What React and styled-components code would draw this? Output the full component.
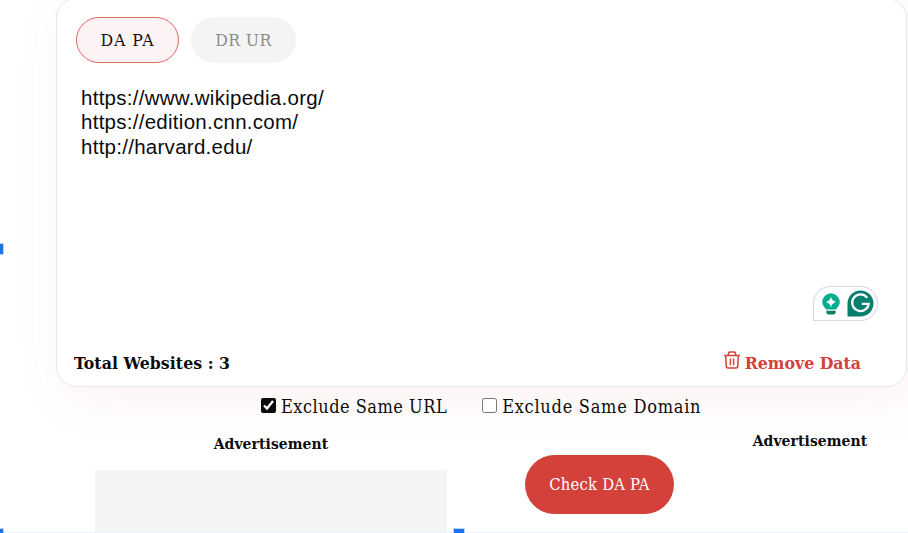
import React, { useState } from 'react';
import styled, { createGlobalStyle } from 'styled-components';

export default function App() {
  const [tab, setTab] = useState('DA PA');
  const [sites, setSites] = useState(
    'https://www.wikipedia.org/\nhttps://edition.cnn.com/\nhttp://harvard.edu/'
  );
  const [sameUrl, setSameUrl] = useState(true);
  const [sameDomain, setSameDomain] = useState(false);
  const total = sites.split('\n').filter((line) => line.trim()).length;

  return (
    <>
      <GlobalStyle />
      <Page>
        <Card>
          <Tabs>
            <Tab $active={tab === 'DA PA'} onClick={() => setTab('DA PA')}>
              DA PA
            </Tab>
            <Tab $wide $active={tab === 'DR UR'} onClick={() => setTab('DR UR')}>
              DR UR
            </Tab>
          </Tabs>
          <TextArea
            value={sites}
            spellCheck={false}
            onChange={(e) => setSites(e.target.value)}
          />
          <Assistant>
            <BulbIcon />
            <WriterIcon />
          </Assistant>
          <CardFooter>
            <Total>Total Websites : {total}</Total>
            <RemoveButton onClick={() => setSites('')}>
              <TrashIcon />
              Remove Data
            </RemoveButton>
          </CardFooter>
        </Card>
        <Options>
          <Option $spacing={0.5}>
            <Check
              type="checkbox"
              checked={sameUrl}
              onChange={() => setSameUrl(!sameUrl)}
            />
            Exclude Same URL
          </Option>
          <Option $spacing={0.75}>
            <Check
              type="checkbox"
              checked={sameDomain}
              onChange={() => setSameDomain(!sameDomain)}
            />
            Exclude Same Domain
          </Option>
        </Options>
        <Bottom>
          <AdColumn>
            <AdLabel>Advertisement</AdLabel>
            <AdBox />
          </AdColumn>
          <CheckButton>Check {tab}</CheckButton>
          <SideAd>
            <AdLabel>Advertisement</AdLabel>
          </SideAd>
        </Bottom>
        <SelectionEdge />
        <Handle $left={-8} $top={243} />
        <Handle $left={-8} $top={528} />
        <Handle $left={453} $top={528} />
      </Page>
    </>
  );
}

function TrashIcon() {
  return (
    <svg width="16" height="18" viewBox="0 0 17 19" fill="none" stroke="#d4403a" strokeWidth="1.6">
      <path d="M0 4.6h17M4.500 4.300l.5-2.200q.3-1 1.400-1h4.200q1.100 0 1.400 1l.5 2.200M1.700 4.700l.7 11.600q.1 1.700 1.700 1.700h8.800q1.600 0 1.700-1.700l.7-11.600M6.800 8v7M10.200 8v7" />
    </svg>
  );
}

function BulbIcon() {
  return (
    <svg width="18" height="22" viewBox="0 0 18 22">
      <path
        fill="#08ac8e"
        d="M9 .3a8.8 8.8 0 0 1 8.8 8.8c0 3.500-2.400 5-3.700 7.400H3.900C2.600 14.100.2 12.600.2 9.100A8.800 8.800 0 0 1 9 .3z"
      />
      <path
        fill="#fff"
        d="M9 3.800Q9.900 8.100 14.200 9 9.900 9.900 9 14.200 8.100 9.900 3.800 9 8.100 8.100 9 3.800z"
      />
      <path fill="#07806c" d="M4.300 17.800h9.400v1q0 2.700-2.700 2.700H7q-2.700 0-2.700-2.700z" />
    </svg>
  );
}

function WriterIcon() {
  return (
    <svg width="27" height="27" viewBox="0 0 27 27">
      <path fill="#067f6d" d="M13.500.5a13 13 0 1 1 0 26H.5v-13a13 13 0 0 1 13-13z" />
      <path
        fill="none"
        stroke="#fff"
        strokeWidth="2.200"
        d="M20.200 7.800A8.300 8.300 0 1 0 21.700 13.900H14.800M21.700 12.800Q21.700 15.600 20 18.600"
      />
    </svg>
  );
}

const GlobalStyle = createGlobalStyle`
  * {
    box-sizing: border-box;
  }
  body {
    margin: 0;
    background: #ffffff;
    color: #0c0c0c;
    font-family: 'DejaVu Serif Condensed', 'DejaVu Serif', serif;
    font-stretch: condensed;
  }
  button {
    font-family: inherit;
    font-stretch: inherit;
    padding: 0;
    cursor: pointer;
    white-space: nowrap;
  }
`;

const Page = styled.div`
  position: relative;
  width: 908px;
  height: 533px;
  overflow: hidden;
  display: flex;
  flex-direction: column;
`;

const Card = styled.div`
  flex: none;
  display: flex;
  flex-direction: column;
  width: 851px;
  height: 389px;
  margin: -2px 0 0 56px;
  padding: 18px 45px 11px 19px;
  background: #ffffff;
  border: 1px solid #e8e6e8;
  border-radius: 20px;
  box-shadow: 10px 10px 54px rgba(212, 64, 58, 0.08);
`;

const Tabs = styled.div`
  display: flex;
  gap: 12px;
`;

const Tab = styled.button`
  width: ${(props) => (props.$wide ? 105 : 103)}px;
  height: 46px;
  border: 1px solid ${(props) => (props.$active ? '#e0645f' : '#f4f4f4')};
  border-radius: 23px;
  background: ${(props) => (props.$active ? '#fef3f4' : '#f4f4f4')};
  color: ${(props) => (props.$active ? '#111111' : '#8c8c8c')};
  font-size: 17.5px;
  letter-spacing: ${(props) => (props.$wide ? 0.4 : 0.9)}px;
`;

const TextArea = styled.textarea`
  flex: 1;
  margin-top: 23px;
  padding: 0 5px;
  border: none;
  outline: none;
  resize: none;
  background: transparent;
  color: #0c0c0c;
  font-family: 'Liberation Sans', Arial, sans-serif;
  font-size: 20.5px;
  letter-spacing: 0.27px;
  line-height: 24.3px;
`;

const Assistant = styled.div`
  align-self: flex-end;
  display: flex;
  align-items: center;
  gap: 7px;
  width: 65px;
  height: 35px;
  margin-right: -17px;
  padding-left: 8px;
  border: 1px solid #d5d8e6;
  border-radius: 18px 18px 18px 1px;
  background: #ffffff;
`;

const CardFooter = styled.div`
  display: flex;
  justify-content: space-between;
  align-items: center;
  height: 24px;
  margin-top: 30px;
  margin-left: -2px;
`;

const Total = styled.div`
  font-size: 17.5px;
  font-weight: bold;
  letter-spacing: 0.05px;
`;

const RemoveButton = styled.button`
  display: flex;
  align-items: center;
  gap: 5px;
  border: none;
  background: none;
  color: #d4403a;
  font-size: 17.5px;
  font-weight: bold;
  letter-spacing: 0;

  svg {
    margin-top: -6px;
  }
`;

const Options = styled.div`
  flex: none;
  display: flex;
  gap: 35px;
  height: 40px;
  padding-left: 261px;
`;

const Option = styled.label`
  display: flex;
  align-items: center;
  height: 38px;
  white-space: nowrap;
  font-size: 18px;
  letter-spacing: ${(props) => props.$spacing}px;
`;

const Check = styled.input`
  width: 15px;
  height: 15px;
  margin: 0 5px 2px 0;
  accent-color: #0c0c0c;
`;

const Bottom = styled.div`
  flex: 1;
  display: flex;
  align-items: flex-start;
  padding-left: 95px;
`;

const AdColumn = styled.div`
  width: 352px;
  margin-top: 6px;
`;

const AdLabel = styled.div`
  height: 22px;
  line-height: 22px;
  text-align: center;
  white-space: nowrap;
  font-size: 15.5px;
  font-weight: bold;
  letter-spacing: 0.08px;
`;

const AdBox = styled.div`
  height: 80px;
  margin-top: 15px;
  background: #f4f4f4;
`;

const CheckButton = styled.button`
  width: 149px;
  height: 59px;
  margin: 28px 0 0 78px;
  border: none;
  border-radius: 30px;
  background: #d4403a;
  color: #ffffff;
  font-size: 16.5px;
  letter-spacing: 0.2px;
`;

const SideAd = styled.div`
  width: 116px;
  margin: 3px 0 0 78px;
`;

const SelectionEdge = styled.div`
  position: absolute;
  left: 0;
  right: 0;
  bottom: 0;
  height: 1px;
  background: #edf1fb;
`;

const Handle = styled.div`
  position: absolute;
  left: ${(props) => props.$left}px;
  top: ${(props) => props.$top}px;
  width: 12px;
  height: 12px;
  background: #1a73e8;
  border: 1px solid #b9d5f9;
`;
